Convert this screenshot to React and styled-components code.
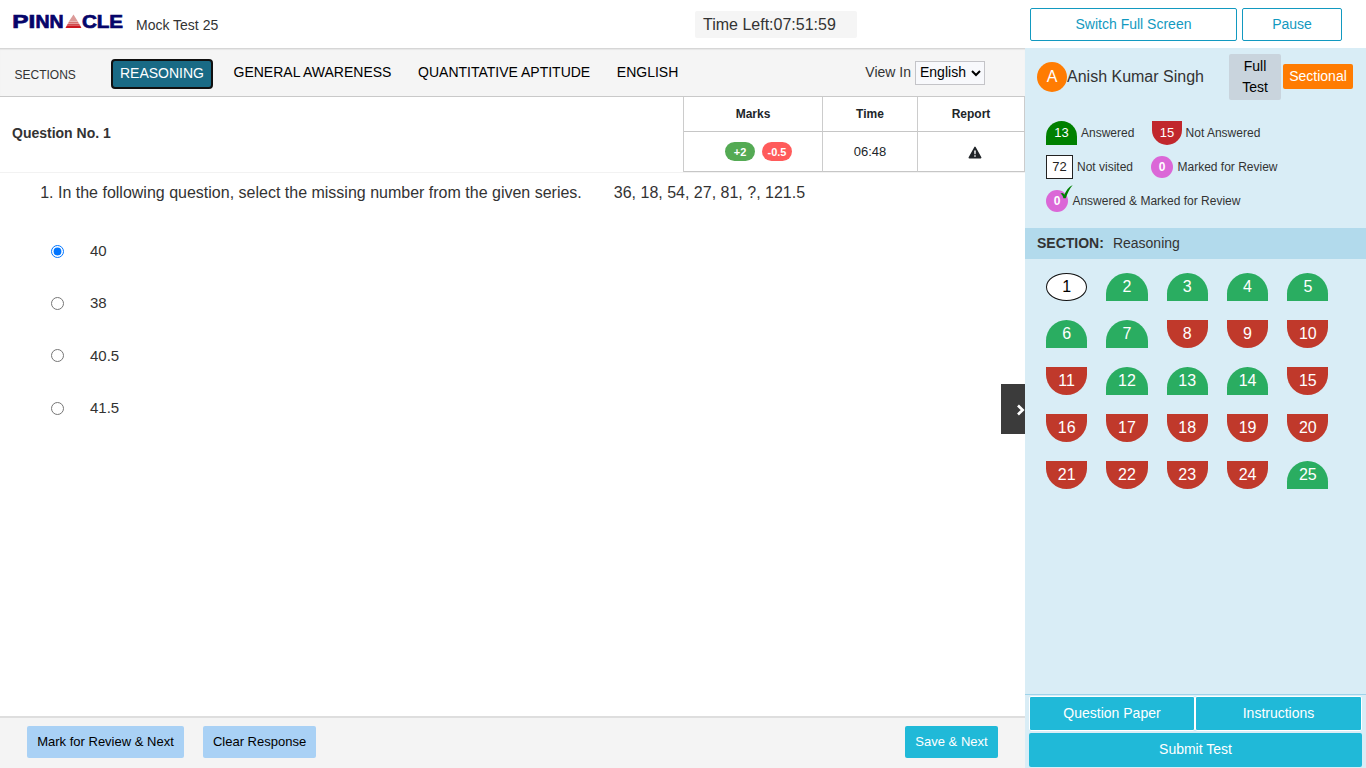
import React, { useState } from "react";
import styled, { createGlobalStyle, css } from "styled-components";

const GlobalStyle = createGlobalStyle`
  * { box-sizing: border-box; }
  body {
    margin: 0;
    overflow: hidden;
    background: #fff;
    color: #333;
    font-family: "Liberation Sans", Arial, sans-serif;
    font-size: 14px;
    line-height: 20px;
  }
  button, select { font-family: inherit; cursor: pointer; }
`;

const Page = styled.div`
  display: flex;
  flex-direction: column;
  width: 1366px;
  height: 768px;
`;

const Header = styled.header`
  display: flex;
  height: 48px;
  flex: none;
`;

const Logo = styled.svg`
  width: 112px;
  height: 20px;
  margin: 11px 0 0 12px;
`;

const TestName = styled.div`
  width: 571px;
  padding: 15px 0 0 12px;
`;

const Timer = styled.div`
  width: 162px;
  height: 27px;
  margin-top: 11px;
  padding-left: 8px;
  border-radius: 2px;
  background: #f5f5f5;
  font-size: 16px;
  line-height: 27px;
`;

const HeaderActions = styled.div`
  display: flex;
  gap: 5px;
  margin: 8px 0 0 173px;
`;

const OutlineButton = styled.button`
  width: ${(p) => p.$width}px;
  height: 33px;
  padding: 0 0 1px;
  border: 1px solid #1299c0;
  border-radius: 2px;
  background: #fff;
  color: #1299c0;
  font-size: 14px;
`;

const Body = styled.div`
  display: flex;
  flex: 1;
  min-height: 0;
`;

const Main = styled.main`
  position: relative;
  display: flex;
  flex-direction: column;
  width: 1025px;
`;

const SectionBar = styled.nav`
  display: flex;
  height: 49px;
  flex: none;
  border-top: 1px solid #d6d6d6;
  border-bottom: 1px solid #c9c9c9;
  background: #f5f5f5;
  box-shadow: inset 0 1px 1px #e6e6e6;
`;

const SectionsLabel = styled.div`
  width: 111px;
  padding: 16px 0 0 14.5px;
  font-size: 12px;
`;

const SectionTab = styled.button`
  height: 30px;
  margin: 10px 6.6px 0 0;
  padding: 0 10px 5px;
  border: 0;
  background: none;
  color: #000;
  font-size: 14px;
  white-space: nowrap;
  ${(p) =>
    p.$active &&
    css`
      margin-right: 10.5px;
      padding: 0 7px 3px;
      border: 2px solid #101010;
      border-radius: 4px;
      background: #196a85;
      color: #fff;
    `}
`;

const LanguagePicker = styled.label`
  display: flex;
  align-items: flex-start;
  margin: 12px 40px 0 auto;
  line-height: 23px;
  gap: 4px;
`;

const LanguageSelect = styled.select`
  width: 70px;
  height: 24px;
  padding: 0 0 2px;
  border: 1px solid #c4c4c8;
  border-radius: 0;
  background: #f8f9fc;
  color: #000;
  font-size: 14px;
`;

const QuestionHeader = styled.div`
  display: flex;
  justify-content: space-between;
  height: 76px;
  flex: none;
  border-bottom: 1px solid #f2f2f2;
`;

const QuestionNumber = styled.strong`
  padding: 26px 0 0 12px;
`;

const InfoTable = styled.div`
  display: grid;
  grid-template-columns: 139px 95px 107px;
  grid-template-rows: 35px 40px;
  width: 342px;
  height: 75px;
  border-left: 1px solid #ccc;
`;

const InfoCell = styled.div`
  display: flex;
  align-items: center;
  justify-content: center;
  gap: 7px;
  padding: 0 0 ${(p) => (p.$head ? 1 : 0)}px ${(p) => p.$indent || 0}px;
  border-right: 1px solid #ccc;
  border-bottom: 1px solid #c6c6c6;
  color: #212529;
  font-size: ${(p) => (p.$head ? 12 : 13)}px;
  font-weight: ${(p) => (p.$head ? 700 : 400)};
`;

const MarkBadge = styled.span`
  width: 30px;
  height: 19px;
  border-radius: 10px;
  background: ${(p) => p.$color};
  color: #fff;
  font-size: 11px;
  font-weight: 700;
  line-height: 20px;
  text-align: center;
`;

const WarningIcon = styled.svg`
  width: 14px;
  height: 13px;
  margin: 2px 0 0 7px;
`;

const QuestionText = styled.div`
  padding: 9px 0 0 40.2px;
  font-size: 16px;
  line-height: 22px;
`;

const Series = styled.span`
  margin-left: 32px;
`;

const Options = styled.div`
  display: flex;
  flex-direction: column;
  gap: 30.4px;
  padding: 36px 0 0 51px;
`;

const Option = styled.label`
  display: flex;
  align-items: center;
  height: 22px;
  font-size: 15px;
`;

const Radio = styled.input`
  width: 13px;
  height: 13px;
  margin: 0 26px 0 0;
`;

const CollapseHandle = styled.button`
  position: absolute;
  top: 336px;
  right: 0;
  display: flex;
  align-items: center;
  justify-content: flex-end;
  width: 24px;
  height: 50px;
  padding: 2px 0 0;
  border: 0;
  background: #3b3b3b;
`;

const Footer = styled.footer`
  display: flex;
  align-items: flex-start;
  gap: 19px;
  height: 52px;
  margin-top: auto;
  padding: 8px 27px;
  border-top: 2px solid #dedede;
  background: #f4f4f4;
`;

const FooterButton = styled.button`
  width: ${(p) => p.$width}px;
  height: 32px;
  margin-left: ${(p) => (p.$primary ? "auto" : 0)};
  padding: 0 0 1px;
  border: 0;
  border-radius: 2px;
  background: ${(p) => (p.$primary ? "#20b9d8" : "#a9d1f5")};
  color: ${(p) => (p.$primary ? "#fff" : "#000")};
  font-size: 13px;
`;

const Sidebar = styled.aside`
  display: flex;
  flex-direction: column;
  width: 341px;
  background: #d9edf6;
`;

const Profile = styled.div`
  display: flex;
  align-items: center;
  height: 58px;
  padding: 0 11px 0 12px;
`;

const Avatar = styled.div`
  width: 30px;
  height: 30px;
  border-radius: 50%;
  background: #ff7c02;
  color: #fff;
  font-size: 16px;
  line-height: 29px;
  text-align: center;
`;

const UserName = styled.div`
  width: 162px;
  font-size: 16px;
  white-space: nowrap;
`;

const ModeButton = styled.button`
  width: ${(p) => p.$width}px;
  height: ${(p) => p.$height}px;
  margin-right: 2px;
  padding: 0 ${(p) => (p.$active ? 0 : 8)}px 1px;
  border: 0;
  border-radius: 2px;
  flex: none;
  background: ${(p) => (p.$active ? "#ff7c02" : "#c9d4dd")};
  color: ${(p) => (p.$active ? "#fff" : "#000")};
  font-size: 14px;
  line-height: 21px;
  ${(p) => p.$active && css`
    margin-top: -1px;
  `}
`;

const Legend = styled.div`
  display: flex;
  flex-direction: column;
  gap: 10px;
  height: 122px;
  padding: 15px 0 0 21px;
`;

const LegendRow = styled.div`
  display: flex;
  align-items: center;
  height: 24px;
`;

const LegendItem = styled.div`
  display: flex;
  align-items: center;
  gap: ${(p) => p.$gap}px;
  width: ${(p) => p.$width}px;
  font-size: 12px;
  white-space: nowrap;
`;

const LegendMark = styled.span`
  position: relative;
  height: 24px;
  color: #fff;
  font-size: 13px;
  line-height: 24px;
  text-align: center;
  ${(p) => p.$kind === "answered" && css`
    width: 31px;
    border-radius: 16px 16px 0 0;
    background: #008000;
  `}
  ${(p) => p.$kind === "missed" && css`
    width: 30px;
    border-radius: 0 0 15px 15px;
    background: #c1272d;
  `}
  ${(p) => p.$kind === "unseen" && css`
    width: 27px;
    border: 1px solid #222;
    background: #fff;
    color: #222;
    line-height: 22px;
  `}
  ${(p) => p.$kind === "review" && css`
    width: 22px;
    height: 22px;
    border-radius: 50%;
    background: #db67d7;
    font-size: 12px;
    font-weight: 700;
    line-height: 22px;
  `}
`;

const Tick = styled.svg`
  position: absolute;
  top: -5px;
  left: 14px;
  width: 13px;
  height: 14px;
`;

const SectionTitle = styled.div`
  height: 31px;
  padding: 5px 0 0 12px;
  background: #b2daec;
`;

const SectionName = styled.span`
  margin-left: 9px;
`;

const Palette = styled.div`
  display: grid;
  grid-template-columns: repeat(5, 41.3px);
  grid-auto-rows: 28px;
  gap: 19px;
  padding: 14px 0 0 21px;
`;

const PaletteButton = styled.button`
  padding: 0 0 1px;
  border: 0;
  border-radius: ${(p) => (p.$kind === "answered" ? "21px 21px 0 0" : "0 0 21px 21px")};
  background: ${(p) => (p.$kind === "answered" ? "#2aad61" : "#c0392b")};
  color: #fff;
  font-size: 16px;
  ${(p) => p.$kind === "current" && css`
    border: 1px solid #111;
    border-radius: 50%;
    background: #fff;
    color: #000;
  `}
`;

const SidebarActions = styled.div`
  display: grid;
  grid-template-columns: 166px 167px;
  grid-template-rows: 35px 34px;
  row-gap: 2px;
  margin-top: auto;
  height: 74px;
  padding: 1px 0 0 4px;
  border-top: 1px solid #9fd3ea;
`;

const ActionButton = styled.button`
  padding: 0 0 1px;
  border: 1px solid #fff;
  border-radius: 2px;
  background: #20b9d8;
  color: #fff;
  font-size: 14px;
  ${(p) => p.$wide && css`
    grid-column: span 2;
    padding-bottom: 2px;
    border: 0;
  `}
`;

const SECTIONS = ["REASONING", "GENERAL AWARENESS", "QUANTITATIVE APTITUDE", "ENGLISH"];
const OPTIONS = ["40", "38", "40.5", "41.5"];
const ANSWERED = new Set([2, 3, 4, 5, 6, 7, 12, 13, 14, 25]);
const QUESTIONS = Array.from({ length: 25 }, (_, i) => i + 1);

const kindOf = (n) => (n === 1 ? "current" : ANSWERED.has(n) ? "answered" : "missed");

function PinnacleLogo() {
  return (
    <Logo viewBox="0 0 112 20" aria-label="Pinnacle">
      <g fill="#05056a" stroke="#05056a" strokeWidth="0.7" fontFamily="Liberation Sans, Arial, sans-serif" fontWeight="700" fontSize="18.8">
        <text x="0.2" y="16.7" textLength="23" lengthAdjust="spacingAndGlyphs">PI</text>
        <text x="23.4" y="16.7" textLength="28.2" lengthAdjust="spacingAndGlyphs">NN</text>
        <text x="69.9" y="16.7" textLength="41.2" lengthAdjust="spacingAndGlyphs">CLE</text>
      </g>
      <path d="M61.5 3.5 65.6 10H57.2Z" fill="#dc9a98" />
      <path d="M57 10.4h8.9l1 2H56Z" fill="#d67370" />
      <path d="M55.8 12.7h11.4l.9 1.700H54.800Z" fill="#d14b4b" />
      <path d="M54.8 14.400h13.400l1.200 2.600H53.500Z" fill="#cc1720" />
    </Logo>
  );
}

export default function App() {
  const [choice, setChoice] = useState("40");
  return (
    <Page>
      <GlobalStyle />
      <Header>
        <PinnacleLogo />
        <TestName>Mock Test 25</TestName>
        <Timer>Time Left:07:51:59</Timer>
        <HeaderActions>
          <OutlineButton $width={207}>Switch Full Screen</OutlineButton>
          <OutlineButton $width={100}>Pause</OutlineButton>
        </HeaderActions>
      </Header>
      <Body>
        <Main>
          <SectionBar>
            <SectionsLabel>SECTIONS</SectionsLabel>
            {SECTIONS.map((name, i) => (
              <SectionTab key={name} $active={i === 0}>{name}</SectionTab>
            ))}
            <LanguagePicker>
              View In
              <LanguageSelect defaultValue="English">
                <option>English</option>
              </LanguageSelect>
            </LanguagePicker>
          </SectionBar>
          <QuestionHeader>
            <QuestionNumber>Question No. 1</QuestionNumber>
            <InfoTable>
              <InfoCell $head>Marks</InfoCell>
              <InfoCell $head>Time</InfoCell>
              <InfoCell $head>Report</InfoCell>
              <InfoCell $indent={11}>
                <MarkBadge $color="#54aa54">+2</MarkBadge>
                <MarkBadge $color="#ff5b5b">-0.5</MarkBadge>
              </InfoCell>
              <InfoCell>06:48</InfoCell>
              <InfoCell>
                <WarningIcon viewBox="0 0 14 13">
                  <path d="M7 1.400 12.700 11.700H1.300Z" fill="#212529" stroke="#212529" strokeWidth="1.5" strokeLinejoin="round" />
                  <path d="M6.200 4.400h1.600L7.600 8.200H6.400Z M6.300 9.200h1.400v1.500H6.300Z" fill="#fff" />
                </WarningIcon>
              </InfoCell>
            </InfoTable>
          </QuestionHeader>
          <QuestionText>
            1. In the following question, select the missing number from the given series.
            <Series>36, 18, 54, 27, 81, ?, 121.5</Series>
          </QuestionText>
          <Options>
            {OPTIONS.map((o) => (
              <Option key={o}>
                <Radio type="radio" name="answer" checked={choice === o} onChange={() => setChoice(o)} />
                {o}
              </Option>
            ))}
          </Options>
          <CollapseHandle aria-label="Toggle panel">
            <svg width="9" height="12" viewBox="0 0 9 12">
              <path d="M2 1.600 6.600 6 2 10.400" fill="none" stroke="#fff" strokeWidth="2.7" />
            </svg>
          </CollapseHandle>
          <Footer>
            <FooterButton $width={157}>Mark for Review &amp; Next</FooterButton>
            <FooterButton $width={113}>Clear Response</FooterButton>
            <FooterButton $width={93} $primary>Save &amp; Next</FooterButton>
          </Footer>
        </Main>
        <Sidebar>
          <Profile>
            <Avatar>A</Avatar>
            <UserName>Anish Kumar Singh</UserName>
            <ModeButton $width={52} $height={46}>Full Test</ModeButton>
            <ModeButton $width={70} $height={25} $active>Sectional</ModeButton>
          </Profile>
          <Legend>
            <LegendRow>
              <LegendItem $width={106} $gap={4}><LegendMark $kind="answered">13</LegendMark>Answered</LegendItem>
              <LegendItem $gap={3.6}><LegendMark $kind="missed">15</LegendMark>Not Answered</LegendItem>
            </LegendRow>
            <LegendRow>
              <LegendItem $width={105} $gap={4}><LegendMark $kind="unseen">72</LegendMark>Not visited</LegendItem>
              <LegendItem $gap={4.5}><LegendMark $kind="review">0</LegendMark>Marked for Review</LegendItem>
            </LegendRow>
            <LegendRow>
              <LegendItem $gap={4.4}>
                <LegendMark $kind="review">
                  0
                  <Tick viewBox="0 0 13 14">
                    <path d="M.5 8.800C2 7.200 3.300 7.800 4.300 9.800 6.200 5.500 8.500 2 12.700 0 9.500 4 7.400 8.300 5.700 13.200H3.400C2.800 10.800 1.900 9 .5 8.800Z" fill="#008000" />
                  </Tick>
                </LegendMark>
                Answered &amp; Marked for Review
              </LegendItem>
            </LegendRow>
          </Legend>
          <SectionTitle>
            <strong>SECTION:</strong>
            <SectionName>Reasoning</SectionName>
          </SectionTitle>
          <Palette>
            {QUESTIONS.map((n) => (
              <PaletteButton key={n} $kind={kindOf(n)}>{n}</PaletteButton>
            ))}
          </Palette>
          <SidebarActions>
            <ActionButton>Question Paper</ActionButton>
            <ActionButton>Instructions</ActionButton>
            <ActionButton $wide>Submit Test</ActionButton>
          </SidebarActions>
        </Sidebar>
      </Body>
    </Page>
  );
}
